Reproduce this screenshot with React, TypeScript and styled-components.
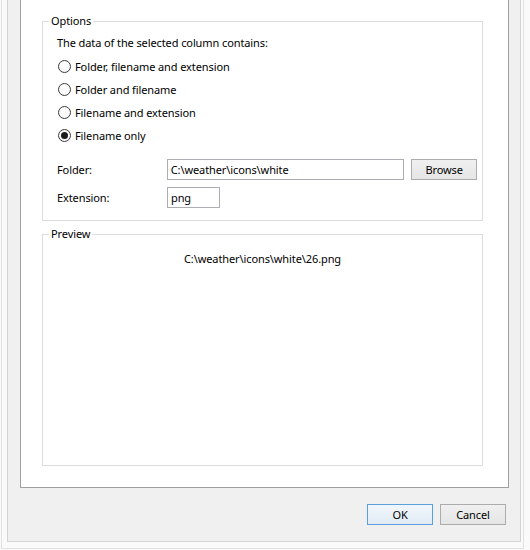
import React from "react";
import styled, { createGlobalStyle } from "styled-components";

const Global = createGlobalStyle`
  html, body {
    margin: 0;
    padding: 0;
    background: #fafafa;
  }
  body {
    font-family: "Noto Sans", "Liberation Sans", sans-serif;
    font-size: 11px;
    letter-spacing: -0.1px;
    color: #000;
  }
  * { box-sizing: border-box; }
`;

const Window = styled.div`
  width: 530px;
  height: 550px;
  overflow: hidden;
  background: #fafafa;
`;

const Shell = styled.div`
  margin-left: 1px;
  width: 523px;
  height: 549px;
  border: 1px solid #e2e2e2;
  border-top: none;
  padding: 0 2px 6px 5px;
`;

const Frame = styled.div`
  width: 514px;
  height: 542px;
  background: #f0f0f0;
  border: 1px solid #d3d3d3;
  border-top: none;
  padding: 0 11px 0 12px;
  display: flex;
  flex-direction: column;
`;

const Panel = styled.div`
  margin-top: -1px;
  height: 489px;
  background: #fff;
  border: 1px solid #a0a0a0;
  padding: 21px 25px 21px 21px;
  display: flex;
  flex-direction: column;
  gap: 13px;
`;

const Group = styled.div<{ $grow?: boolean }>`
  position: relative;
  border: 1px solid #dcdcdc;
  box-shadow: inset 1px 1px 0 #fff;
  flex: ${(p) => (p.$grow ? "1" : "none")};
`;

const Legend = styled.span`
  position: absolute;
  top: -9px;
  left: 6px;
  padding: 0 2px;
  background: #fff;
  line-height: 16px;
`;

const OptionsBody = styled.div`
  padding: 13px 5px 12px 14px;
`;

const Description = styled.div`
  line-height: 16px;
  margin-bottom: 4px;
`;

const RadioList = styled.div`
  display: flex;
  flex-direction: column;
`;

const RadioRow = styled.label`
  height: 23px;
  display: flex;
  align-items: center;
  gap: 4px;
  padding-left: 1px;
`;

const Radio = styled.input.attrs({ type: "radio" })`
  appearance: none;
  margin: 0;
  width: 13px;
  height: 13px;
  border-radius: 50%;
  border: 1px solid #3c3c3c;
  background: radial-gradient(circle at 50% 40%, #ffffff 0%, #f4f4f4 100%);
  display: grid;
  place-items: center;
  &:checked::after {
    content: "";
    width: 7px;
    height: 7px;
    border-radius: 50%;
    background: #1b1b1b;
  }
`;

const FieldRow = styled.div<{ $top: number }>`
  display: flex;
  align-items: center;
  margin-top: ${(p) => p.$top}px;
  height: 21px;
`;

const FieldLabel = styled.span`
  width: 110px;
`;

const TextBox = styled.div<{ $width: number }>`
  width: ${(p) => p.$width}px;
  height: 21px;
  border: 1px solid #abadb3;
  padding: 0 3px;
  line-height: 19px;
  white-space: nowrap;
  overflow: hidden;
  background: #fff;
`;

const Button = styled.button<{ $primary?: boolean }>`
  width: 66px;
  height: 21px;
  padding: 0;
  font: inherit;
  letter-spacing: inherit;
  color: #000;
  border: 1px solid ${(p) => (p.$primary ? "#5b9fdc" : "#acacac")};
  background: ${(p) =>
    p.$primary
      ? "linear-gradient(#f0f6fb, #e2ecf5)"
      : "linear-gradient(#f0f0f0, #e5e5e5)"};
`;

const BrowseButton = styled(Button)`
  margin-left: 7px;
`;

const PreviewText = styled.div`
  padding-top: 16px;
  text-align: center;
  line-height: 16px;
`;

const Footer = styled.div`
  display: flex;
  justify-content: flex-end;
  gap: 7px;
  padding: 16px 3px 15px 0;
`;

const choices = [
  "Folder, filename and extension",
  "Folder and filename",
  "Filename and extension",
  "Filename only",
];

export default function App() {
  return (
    <>
      <Global />
      <Window>
        <Shell>
          <Frame>
            <Panel>
              <Group>
                <Legend>Options</Legend>
                <OptionsBody>
                  <Description>The data of the selected column contains:</Description>
                  <RadioList>
                    {choices.map((c, i) => (
                      <RadioRow key={c}>
                        <Radio name="content" defaultChecked={i === 3} />
                        {c}
                      </RadioRow>
                    ))}
                  </RadioList>
                  <FieldRow $top={12}>
                    <FieldLabel>Folder:</FieldLabel>
                    <TextBox $width={238}>C:\weather\icons\white</TextBox>
                    <BrowseButton>Browse</BrowseButton>
                  </FieldRow>
                  <FieldRow $top={7}>
                    <FieldLabel>Extension:</FieldLabel>
                    <TextBox $width={53}>png</TextBox>
                  </FieldRow>
                </OptionsBody>
              </Group>
              <Group $grow>
                <Legend>Preview</Legend>
                <PreviewText>C:\weather\icons\white\26.png</PreviewText>
              </Group>
            </Panel>
            <Footer>
              <Button $primary>OK</Button>
              <Button>Cancel</Button>
            </Footer>
          </Frame>
        </Shell>
      </Window>
    </>
  );
}
